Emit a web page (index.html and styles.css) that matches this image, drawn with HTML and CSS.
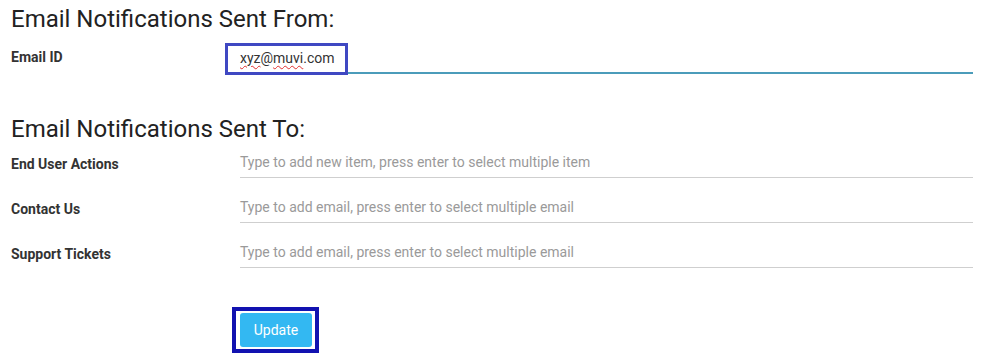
FILE: index.html
```html
<!DOCTYPE html>
<html>
<head>
<meta charset="utf-8">
<link rel="stylesheet" href="styles.css">
</head>
<body>
<div class="page">
  <h2 class="section-title">Email Notifications Sent From:</h2>
  <div class="form-row first">
    <label class="field-label">Email ID</label>
    <div class="field active">
      <span class="value"><span class="misspelled">xyz</span>@<span class="misspelled">muvi</span>.com</span>
      <span class="highlight-box email-box"></span>
    </div>
  </div>

  <h2 class="section-title second">Email Notifications Sent To:</h2>
  <div class="form-row">
    <label class="field-label">End User Actions</label>
    <div class="field"><span class="placeholder">Type to add new item, press enter to select multiple item</span></div>
  </div>
  <div class="form-row">
    <label class="field-label">Contact Us</label>
    <div class="field"><span class="placeholder">Type to add email, press enter to select multiple email</span></div>
  </div>
  <div class="form-row">
    <label class="field-label">Support Tickets</label>
    <div class="field"><span class="placeholder">Type to add email, press enter to select multiple email</span></div>
  </div>

  <div class="actions">
    <div class="btn-frame">
      <button class="btn-update">Update</button>
    </div>
  </div>
</div>
</body>
</html>
```

FILE: styles.css
```css
* { box-sizing: border-box; }
html, body { margin: 0; padding: 0; background: #fff; }
body { font-family: Roboto, "Liberation Sans", sans-serif; color: #333; }
.page { padding: 0 11px; width: 984px; }
.section-title {
  margin: 0;
  padding-top: 5px;
  font-size: 24px;
  font-weight: 400;
  line-height: 28px;
  color: #222;
}
.section-title.second { margin-top: 28px; }
.form-row {
  display: grid;
  grid-template-columns: 229px 733px;
  height: 45px;
}
.form-row.first { margin-top: 4px; }
.field-label {
  font-size: 14px;
  line-height: 16px;
  font-weight: 700;
  color: #333;
  padding-top: 13px;
}
.form-row.first .field-label { padding-top: 12px; }
.field {
  position: relative;
  height: 35px;
  border-bottom: 1px solid #cfcfcf;
  font-size: 14px;
  line-height: 16px;
  padding-top: 11px;
}
.field.active {
  border-bottom: 2px solid #4b9cba;
  height: 37px;
  padding-top: 13px;
}
.placeholder { color: #9a9a9a; }
.value { color: #333; }
.misspelled {
  text-decoration: underline wavy #e03030;
  text-decoration-thickness: 1px;
  text-underline-offset: 2px;
}
.highlight-box { position: absolute; pointer-events: none; }
.email-box {
  left: -15px;
  top: 6px;
  width: 123px;
  height: 32px;
  border: 3px solid #3f48c2;
}
.actions {
  display: flex;
  margin-top: 29px;
  padding-left: 221px;
}
.btn-frame {
  display: flex;
  border: 4px solid #1212b0;
  padding: 2px 3px 2px 4px;
}
.btn-update {
  display: block;
  width: 72px;
  height: 34px;
  margin: 0;
  padding: 0;
  border: 0;
  border-radius: 3px;
  background: #33b8f2;
  color: #fff;
  font-family: Roboto, "Liberation Sans", sans-serif;
  font-size: 14px;
  font-weight: 400;
}
```
